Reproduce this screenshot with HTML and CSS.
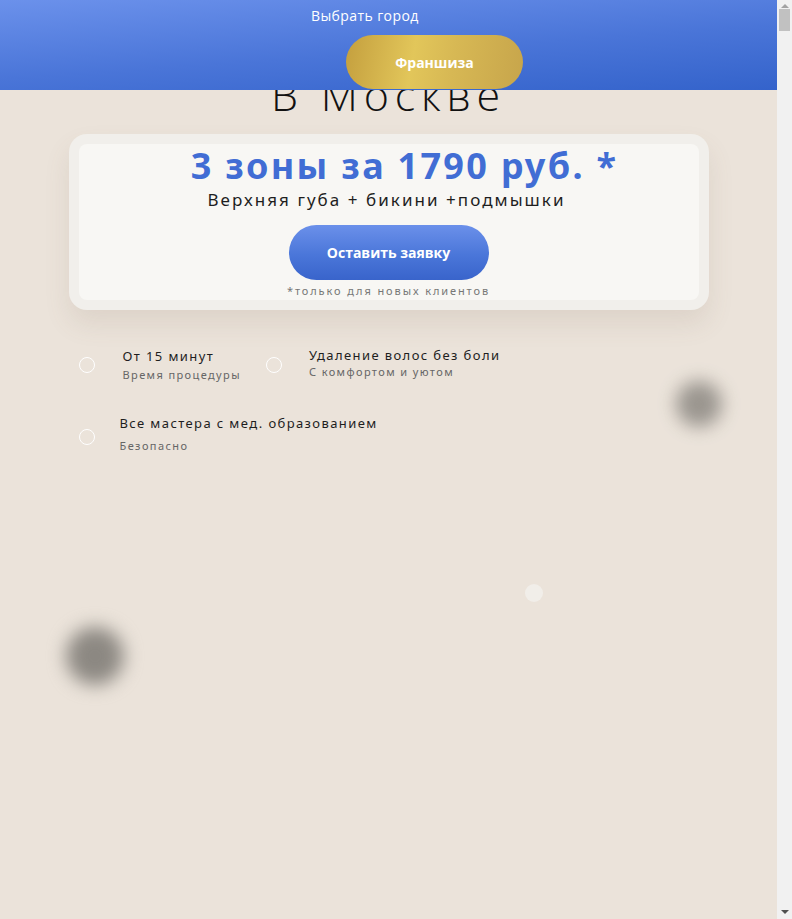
FILE: index.html
```html
<!DOCTYPE html>
<html lang="ru">
<head>
	<meta charset="utf-8">
	<meta name="viewport" content="width=device-width, initial-scale=1">
	<title>Лазерная эпиляция в Москве</title>
	<link rel="stylesheet" href="styles.css">
</head>
<body>
	<header class="topbar">
		<a class="city-link" href="#">Выбрать город</a>
		<a class="franchise-btn" href="#">Франшиза</a>
	</header>

	<div class="app">
		<div class="scroller">
			<main class="page">
				<section class="hero">
					<span class="blur-dot blur-dot--right"></span>
					<span class="blur-dot blur-dot--left"></span>
					<span class="light-dot"></span>

					<h1 class="hero-title">в Москве</h1>

					<div class="offer">
						<div class="offer-inner">
							<h2 class="offer-price">3 зоны за 1790 руб. *</h2>
							<p class="offer-zones">Верхняя губа + бикини +подмышки</p>
							<a class="offer-btn" href="#">Оставить заявку</a>
							<p class="offer-note">*только для новых клиентов</p>
						</div>
					</div>

					<ul class="features">
						<li class="feature">
							<span class="feature-dot"></span>
							<div class="feature-text">
								<div class="feature-title">От 15 минут</div>
								<div class="feature-sub">Время процедуры</div>
							</div>
						</li>
						<li class="feature feature--tight">
							<span class="feature-dot"></span>
							<div class="feature-text">
								<div class="feature-title">Удаление волос без боли</div>
								<div class="feature-sub">С комфортом и уютом</div>
							</div>
						</li>
						<li class="feature feature--loose">
							<span class="feature-dot"></span>
							<div class="feature-text">
								<div class="feature-title">Все мастера с мед. образованием</div>
								<div class="feature-sub">Безопасно</div>
							</div>
						</li>
					</ul>
				</section>
			</main>
		</div>

		<div class="scrollbar">
			<span class="scrollbar-arrow scrollbar-arrow--up"></span>
			<div class="scrollbar-track">
				<span class="scrollbar-thumb"></span>
			</div>
			<span class="scrollbar-arrow scrollbar-arrow--down"></span>
		</div>
	</div>
</body>
</html>
```

FILE: styles.css
```css
html, body
{
	margin: 0;
	padding: 0;
	height: 100%;
	overflow: hidden;
}
body
{
	background-color: #ebe3da;
	font-family: "Noto Sans", "Open Sans", sans-serif;
	color: #222222;
}
a
{
	text-decoration: none;
}
.app
{
	display: flex;
	height: 100%;
}
.scroller
{
	flex: 1;
	height: 100%;
	overflow: hidden;
}

/* полоса прокрутки */
.scrollbar
{
	width: 15px;
	flex-shrink: 0;
	background-color: #f1f1f1;
	display: flex;
	flex-direction: column;
	align-items: center;
}
.scrollbar-arrow
{
	width: 0;
	height: 0;
	border-left: 4px solid transparent;
	border-right: 4px solid transparent;
}
.scrollbar-arrow--up
{
	margin-top: 4px;
	border-bottom: 4px solid #a3a3a3;
}
.scrollbar-arrow--down
{
	margin-bottom: 5px;
	border-top: 4px solid #505050;
}
.scrollbar-track
{
	flex: 1;
	width: 100%;
	padding-top: 1px;
}
.scrollbar-thumb
{
	display: block;
	width: 11px;
	height: 22px;
	margin: 0 auto;
	background-color: #c1c1c1;
}

/* шапка */
.topbar
{
	position: fixed;
	top: 0;
	left: 0;
	right: 15px;
	z-index: 10;
	height: 90px;
	background: linear-gradient(176deg, #6b91eb 0%, #4a75d8 55%, #3463cb 100%);
}
.city-link
{
	position: absolute;
	left: 311px;
	top: 6px;
	font-family: "Open Sans", sans-serif;
	font-size: 14px;
	letter-spacing: 0.4px;
	color: #ffffff;
}
.franchise-btn
{
	position: absolute;
	left: 346px;
	top: 35px;
	width: 177px;
	height: 54px;
	border-radius: 27px;
	display: flex;
	align-items: center;
	justify-content: center;
	background: linear-gradient(100deg, #c49f3e 0%, #e2c65a 38%, #d7b854 60%, #c7a54b 100%);
	color: #ffffff;
	font-family: "Open Sans", sans-serif;
	font-weight: 700;
	font-size: 14px;
}

/* первый экран */
.page
{
	min-height: 36000px;
}
.hero
{
	position: relative;
	width: 640px;
	margin: 0 auto;
	padding-top: 74px;
}
.hero-title
{
	margin: 0 0 18px;
	text-align: center;
	font-family: "Open Sans", sans-serif;
	font-weight: 300;
	font-size: 43px;
	line-height: 42px;
	letter-spacing: 5.8px;
	color: #111111;
	text-transform: capitalize;
}

.offer
{
	background-color: #f1efeb;
	border-radius: 18px;
	padding: 10px;
	box-shadow: 0 14px 26px rgba(120, 100, 80, 0.12);
}
.offer-inner
{
	background-color: #f8f7f4;
	border-radius: 8px;
	display: flex;
	flex-direction: column;
	align-items: center;
	padding: 0 0 2px;
}
.offer-price
{
	margin: 0;
	font-family: "Noto Sans", sans-serif;
	font-weight: 700;
	font-size: 36px;
	line-height: 44px;
	letter-spacing: 2.3px;
	color: #416dd4;
	transform: translateX(16px);
}
.offer-zones
{
	margin: 0;
	font-size: 17px;
	line-height: 24px;
	letter-spacing: 2.05px;
	color: #1e1e1e;
	transform: translateX(-2px);
}
.offer-btn
{
	margin-top: 13px;
	width: 200px;
	height: 55px;
	border-radius: 28px;
	display: flex;
	align-items: center;
	justify-content: center;
	background: linear-gradient(180deg, #6b90ea 0%, #4a76d9 55%, #3964cb 100%);
	color: #ffffff;
	font-family: "Open Sans", sans-serif;
	font-weight: 700;
	font-size: 14px;
}
.offer-note
{
	margin: 3px 0 0;
	font-size: 11px;
	line-height: 15px;
	letter-spacing: 1.9px;
	color: #777777;
}

/* преимущества */
.features
{
	list-style: none;
	margin: 38px 0 0;
	padding: 0 10px;
	display: flex;
	flex-wrap: wrap;
	column-gap: 25px;
	row-gap: 33px;
}
.feature
{
	display: flex;
	align-items: center;
	gap: 28px;
}
.feature-dot
{
	width: 14px;
	height: 14px;
	border: 1.5px solid #ffffff;
	border-radius: 50%;
	flex-shrink: 0;
}
.feature-title
{
	font-size: 13px;
	line-height: 16px;
	letter-spacing: 1.4px;
	color: #1e1e1e;
}
.feature-sub
{
	margin-top: 3px;
	font-size: 11px;
	line-height: 15px;
	letter-spacing: 1.4px;
	color: #666666;
}
.feature--tight
{
	gap: 27px;
	align-self: flex-start;
	margin-top: -1px;
}
.feature--tight .feature-dot
{
	margin-top: 10px;
	align-self: flex-start;
}
.feature--tight .feature-sub
{
	margin-top: 1px;
}
.feature--loose
{
	gap: 25px;
}
.feature--loose .feature-dot
{
	margin-top: 5px;
}
.feature--loose .feature-sub
{
	margin-top: 7px;
}

/* декор */
.blur-dot
{
	position: absolute;
	border-radius: 50%;
	background-color: #8c8882;
	filter: blur(9px);
}
.blur-dot--right
{
	left: 607px;
	top: 381px;
	width: 46px;
	height: 46px;
	opacity: 0.85;
}
.blur-dot--left
{
	left: -3px;
	top: 627px;
	width: 58px;
	height: 58px;
}
.light-dot
{
	position: absolute;
	left: 456px;
	top: 584px;
	width: 18px;
	height: 18px;
	border-radius: 50%;
	background-color: #f1eee9;
}
```
